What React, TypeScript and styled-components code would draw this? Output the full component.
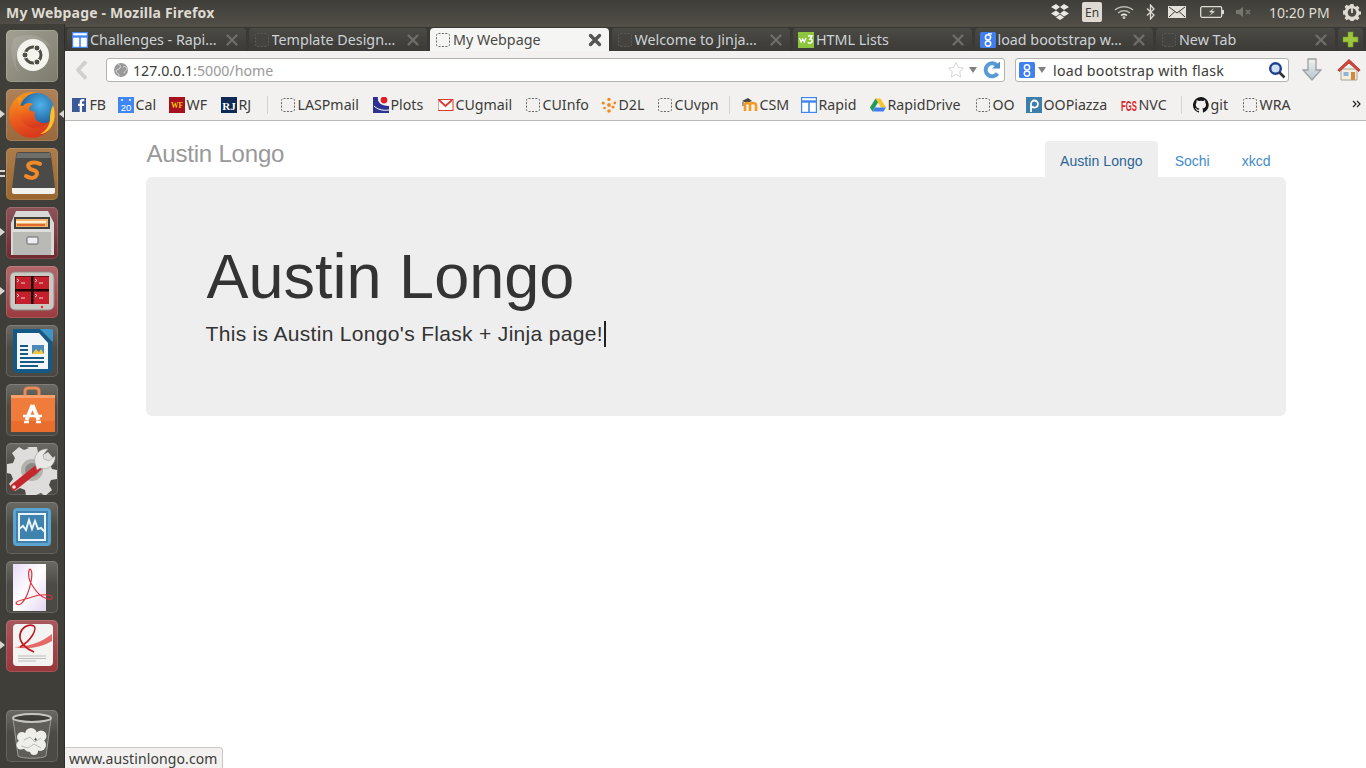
import React from "react";
import styled, { createGlobalStyle } from "styled-components";

const Global = createGlobalStyle`
  html, body { margin: 0; height: 100%; overflow: hidden; background: #fff; }
  #root { height: 100%; }
  * { box-sizing: border-box; }
`;
const UI = `"Noto Sans", "Open Sans", sans-serif`;
const WEB = `"Liberation Sans", Arial, sans-serif`;

const Shell = styled.div`display:flex;flex-direction:column;width:100vw;height:100vh;position:relative;font-family:${UI};`;
const TopBar = styled.header`height:24px;flex:none;display:flex;align-items:center;justify-content:space-between;background:linear-gradient(#3f3e39,#4f4d45);padding-left:6px;`;
const WindowTitle = styled.div`font-size:14px;font-weight:700;color:#dfdbd2;letter-spacing:.2px;`;
const Indicators = styled.div`display:flex;align-items:center;height:24px;padding-right:5px;`;
const Indicator = styled.span<{ $w: number; $l?: number }>`width:${p => p.$w}px;margin-left:${p => p.$l ?? 0}px;display:flex;justify-content:center;align-items:center;flex:none;`;
const LangBox = styled.span`width:20px;height:20px;margin-left:12px;border-radius:2px;background:#dfdbd4;color:#3c3b37;font-size:12px;display:flex;align-items:center;justify-content:center;`;
const Clock = styled.span`width:87px;padding-left:14px;font-size:14px;color:#dfdbd2;white-space:nowrap;`;
const Body = styled.div`flex:1;display:flex;min-height:0;`;
const Launcher = styled.nav`width:65px;flex:none;background:#3f3e38;border-right:1px solid #2f2e2a;display:flex;flex-direction:column;gap:7px;padding:6px 0 6px 6px;`;
const Tile = styled.div<{ $tone: string; $push?: boolean }>`position:relative;width:52px;height:52px;border-radius:5px;background:${p => p.$tone};box-shadow:inset 0 0 0 1px rgba(255,255,255,.14);margin-top:${p => (p.$push ? "auto" : 0)};svg{display:block;}`;
const Pip = styled.i<{ $right?: boolean; $top?: number }>`position:absolute;top:${p => p.$top ?? 21}px;${p => (p.$right ? "right:-6px;border-right:5px solid #d8d6d0;" : "left:-6px;border-left:5px solid #d8d6d0;")}width:0;height:0;border-top:4px solid transparent;border-bottom:4px solid transparent;`;
const DashPip = styled.i<{ $top: number }>`position:absolute;left:-6px;top:${p => p.$top}px;width:5px;height:2px;background:#d8d6d0;`;
const Browser = styled.div`flex:1;min-width:0;display:flex;flex-direction:column;`;
const TabStrip = styled.div`height:27px;flex:none;background:linear-gradient(#4f4d45 0,#565449 8%,#3a3935 13%,#3a3935 100%);padding:4px 0 0 2px;display:flex;gap:3px;`;
const Tab = styled.div<{ $active?: boolean }>`width:178.5px;height:23px;flex:none;display:flex;align-items:center;gap:2px;padding:0 7px 0 5px;border-radius:4px 4px 0 0;font-size:14.3px;white-space:nowrap;
  background:${p => (p.$active ? "#f5f5f4" : "linear-gradient(#4b4a45,#3b3a36)")};color:${p => (p.$active ? "#4a4a46" : "#cdd2d6")};`;
const TabLabel = styled.span`flex:1;overflow:hidden;min-width:0;`;
const NewTab = styled.div`width:25px;height:23px;flex:none;border-radius:4px 4px 0 0;background:linear-gradient(#4b4a45,#3b3a36);display:flex;align-items:center;justify-content:center;`;
const NavBar = styled.div`height:37px;flex:none;background:#f2f1f0;display:flex;align-items:flex-start;padding:7px 0 0 10px;`;
const BackSlot = styled.div`width:31px;height:24px;flex:none;display:flex;align-items:center;`;
const Field = styled.div<{ $w: number }>`width:${p => p.$w}px;height:24px;flex:none;background:#fff;border:1px solid #b2b2ae;border-radius:3px;display:flex;align-items:center;font-size:14.2px;color:#3c3b37;`;
const Host = styled.span`color:#3c3b37;`;
const PathPart = styled.span`color:#999;`;
const Spacer = styled.span`flex:1;`;
const SearchText = styled.span`flex:1;margin-left:6px;color:#3c3b37;white-space:nowrap;letter-spacing:.25px;`;
const ToolSlot = styled.div<{ $l: number }>`margin-left:${p => p.$l}px;height:24px;display:flex;align-items:center;flex:none;`;
const BookmarkBar = styled.div`height:33px;flex:none;background:#f2f1f0;border-bottom:1px solid #b9b9b6;display:flex;align-items:center;padding:1px 0 0 7px;position:relative;`;
const Bookmark = styled.div<{ $w: number }>`width:${p => p.$w}px;flex:none;display:flex;align-items:center;gap:1.5px;font-size:14.2px;color:#3c3b37;white-space:nowrap;`;
const BarSep = styled.div<{ $w: number }>`width:${p => p.$w}px;flex:none;height:18px;&::before{content:"";display:block;width:1px;height:18px;background:#d4d3d0;}`;
const Chevron = styled.div`position:absolute;right:5px;top:12px;line-height:0;`;
const Page = styled.main`flex:1;background:#fff;min-height:0;`;
const Container = styled.div`width:1140px;margin:0 auto;font-family:${WEB};`;
const Header = styled.div`height:56px;display:flex;justify-content:space-between;align-items:flex-end;`;
const Brand = styled.h3`margin:0 0 7px 1px;font-size:24px;font-weight:400;line-height:33px;letter-spacing:-.2px;color:#999;`;
const Pills = styled.ul`margin:0;padding:0;list-style:none;display:flex;gap:2px;`;
const Pill = styled.li<{ $active?: boolean }>`padding:10px 15px 0;height:36px;line-height:20px;font-size:14px;border-radius:4px 4px 0 0;letter-spacing:${p => (p.$active ? ".08px" : "0")};color:${p => (p.$active ? "#2a6496" : "#428bca")};background:${p => (p.$active ? "#eee" : "transparent")};`;
const Jumbotron = styled.section`height:239px;background:#eee;border-radius:6px;padding:65px 60px 0;color:#333;`;
const Heading = styled.h1`margin:0 0 8px 1px;font-size:63px;font-weight:400;line-height:69px;`;
const Lead = styled.p`margin:0;font-size:21px;font-weight:200;line-height:30px;letter-spacing:.32px;display:flex;align-items:center;`;
const Caret = styled.span`width:2px;height:26px;background:#222;margin-left:1px;`;
const StatusTip = styled.div`position:absolute;left:65px;bottom:0;height:21px;width:158px;padding-left:4px;background:#f2f1f0;border:1px solid #c8c8c5;border-left:0;border-bottom:0;border-radius:0 4px 0 0;font-size:14px;line-height:21px;letter-spacing:.1px;color:#3c3b37;white-space:nowrap;`;

const S = { style: { flex: "none" as const } };
const Dash = ({ dark }: { dark?: boolean }) => (
  <svg width="16" height="16" viewBox="0 0 16 16" {...S}>
    <rect x="1.5" y="1.5" width="13" height="13" rx="2" fill={dark ? "#44433f" : "none"} stroke={dark ? "#5e5d59" : "#666"} strokeDasharray="2 1.4" />
  </svg>
);
const Close = ({ active }: { active?: boolean }) => (
  <svg width="14" height="14" viewBox="0 0 14 14" {...S}>
    <path d="M2.5 2.5l9 9M11.5 2.5l-9 9" stroke={active ? "#555" : "#6e6d67"} strokeWidth={active ? 3.4 : 2.4} strokeLinecap="round" />
  </svg>
);
const Rapid = () => (
  <svg width="16" height="16" viewBox="0 0 16 16" {...S}>
    <rect x=".5" y=".5" width="15" height="15" fill="#fff" stroke="#3f86f4" strokeWidth="1.4" />
    <path d="M1 4.5h14" stroke="#3f86f4" strokeWidth="2.4" /><path d="M8 5v10" stroke="#3f86f4" strokeWidth="1.6" />
  </svg>
);
const GBlue = () => (
  <svg width="16" height="16" viewBox="0 0 16 16" {...S}>
    <rect width="16" height="16" rx="1.5" fill="#3f7ff0" />
    <circle cx="8" cy="5.3" r="2.6" fill="none" stroke="#fff" strokeWidth="1.5" />
    <circle cx="8" cy="11.6" r="2.7" fill="none" stroke="#fff" strokeWidth="1.5" />
    <path d="M8 1.8h4" stroke="#fff" strokeWidth="1.2" />
  </svg>
);
const W3 = () => (
  <svg width="16" height="16" viewBox="0 0 16 16" {...S}>
    <rect width="16" height="16" fill="#8cc63f" />
    <path d="M1.5 6l1.6 4 1.6-3 1.6 3L7.8 6" stroke="#fff" strokeWidth="1.2" fill="none" />
    <path d="M10 4h4l-2 3c2 0 2.4 1.4 2 2.8-.5 1.6-3 1.8-4.2.4" stroke="#fff" strokeWidth="1.4" fill="none" />
  </svg>
);
const Fb = () => <svg width="16" height="16" viewBox="0 0 16 16" {...S}><rect width="14" height="14" y="1" fill="#3b5998" /><path d="M10 15V9h2l.3-2.3H10V5.4c0-.7.3-1.1 1.1-1.1h1.2V2.2c-2.8-.4-4.6.4-4.6 2.8v1.7H6V9h1.7v6z" fill="#fff" /></svg>;
const Cal = () => <svg width="16" height="16" viewBox="0 0 16 16" {...S}><rect width="16" height="16" fill="#3f86f4" /><rect x="3" y="2" width="2" height="2" fill="#cfe0fb" /><rect x="11" y="2" width="2" height="2" fill="#cfe0fb" /><text x="8" y="14" textAnchor="middle" fontSize="9.5" fontFamily="Liberation Sans" fill="#fff">20</text></svg>;
const Wf = () => <svg width="16" height="16" viewBox="0 0 16 16" {...S}><rect width="16" height="16" fill="#a6101f" /><text x="8" y="11" textAnchor="middle" fontSize="7.5" fontWeight="700" fontFamily="Liberation Serif" fill="#f5c518">WF</text></svg>;
const Rj = () => <svg width="16" height="16" viewBox="0 0 16 16" {...S}><rect width="16" height="16" fill="#0e2a55" /><text x="8" y="12.5" textAnchor="middle" fontSize="11" fontWeight="700" fontFamily="Liberation Serif" fill="#fff">RJ</text></svg>;
const Plots = () => <svg width="16" height="16" viewBox="0 0 16 16" {...S}><rect width="16" height="16" fill="#f6f6fb" /><path d="M0 0h5c-1 5 3 9 11 9v7H0z" fill="#2d3191" /><path d="M1 9c3 3 8 5 15 4" stroke="#fff" fill="none" /><circle cx="11" cy="3" r="3.4" fill="#e21f26" /></svg>;
const Gmail = () => <svg width="16" height="16" viewBox="0 0 16 16" {...S}><rect y="2.5" width="15" height="11" fill="#fff" stroke="#dc3a2e" /><path d="M1 3l6.5 6L14 3" fill="none" stroke="#dc3a2e" strokeWidth="1.8" /></svg>;
const D2l = () => <svg width="16" height="16" viewBox="0 0 16 16" {...S}><g fill="#f08a1d"><circle cx="8" cy="2.4" r="1.7" /><circle cx="2.2" cy="6" r="1.6" /><circle cx="13.8" cy="6" r="1.4" /><circle cx="8" cy="8" r="1.9" /><circle cx="3.6" cy="11" r="1.3" /><circle cx="12" cy="10" r="1.6" /><circle cx="8" cy="14" r="1.8" /></g></svg>;
const Moodle = () => <svg width="16" height="16" viewBox="0 0 16 16" {...S}><path d="M0 4l6-3 4 3-5 2z" fill="#444" /><path d="M1 5v4" stroke="#444" /><path d="M3 14V8c0-1 .8-2 2.2-2S8 7 8 8v6M8 8c0-1.200.8-2 2.700-2S14 7 14 8v6" fill="none" stroke="#f39a1f" strokeWidth="2.600" /></svg>;
const Drive = () => <svg width="16" height="16" viewBox="0 0 16 16" {...S}><path d="M5.500 1.500h5L16 10.500h-5z" fill="#f8c42d" /><path d="M5.500 1.500L0 10.500l2.500 4L8 5.500z" fill="#1f9d55" /><path d="M2.500 14.500h11l2.500-4H5z" fill="#3f7ff0" /></svg>;
const Piazza = () => <svg width="16" height="16" viewBox="0 0 16 16" {...S}><rect width="16" height="16" fill="#3d7fa8" /><path d="M5 15V7a3.500 3.500 0 117 0 3.500 3.500 0 01-6 2.500" fill="none" stroke="#fff" strokeWidth="1.800" /></svg>;
const Fgs = () => <svg width="16" height="16" viewBox="0 0 16 16" {...S}><text transform="translate(0 13.5) scale(.55 1)" fontSize="14" fontWeight="700" fontFamily="Liberation Sans" fill="#d8232a">FGS</text></svg>;
const Git = () => <svg width="16" height="16" viewBox="0 0 16 16" {...S}><path d="M8 0a8 8 0 00-2.500 15.600c.4.100.5-.2.500-.4v-1.400c-2.200.5-2.700-1-2.700-1-.4-.9-.9-1.200-.9-1.200-.7-.5.100-.5.100-.5.800.1 1.200.8 1.200.8.700 1.200 1.900.9 2.300.7.100-.5.300-.9.500-1.100-1.800-.2-3.700-.9-3.700-4 0-.9.300-1.600.8-2.100-.1-.2-.4-1 .1-2.100 0 0 .7-.2 2.200.8a7.600 7.600 0 014 0c1.500-1 2.200-.8 2.200-.8.400 1.100.2 1.900.1 2.100.5.600.8 1.300.8 2.100 0 3.100-1.900 3.700-3.700 3.900.3.300.6.800.6 1.500v2.200c0 .2.100.5.600.4A8 8 0 008 0z" fill="#161616" /></svg>;

const bookmarks: { t: string; i?: React.ReactNode; w: number; sep?: boolean }[] = [
  { t: "FB", i: <Fb />, w: 46 }, { t: "Cal", i: <Cal />, w: 51 }, { t: "WF", i: <Wf />, w: 52 }, { t: "RJ", i: <Rj />, w: 46 },
  { t: "", w: 13, sep: true },
  { t: "LASPmail", i: <Dash />, w: 93 }, { t: "Plots", i: <Plots />, w: 65 }, { t: "CUgmail", i: <Gmail />, w: 87 }, { t: "CUInfo", i: <Dash />, w: 76 }, { t: "D2L", i: <D2l />, w: 56 }, { t: "CUvpn", i: <Dash />, w: 72 },
  { t: "", w: 13, sep: true },
  { t: "CSM", i: <Moodle />, w: 59 }, { t: "Rapid", i: <Rapid />, w: 69 }, { t: "RapidDrive", i: <Drive />, w: 105 }, { t: "OO", i: <Dash />, w: 51 }, { t: "OOPiazza", i: <Piazza />, w: 95 }, { t: "NVC", i: <Fgs />, w: 60 },
  { t: "", w: 12, sep: true },
  { t: "git", i: <Git />, w: 49 }, { t: "WRA", i: <Dash />, w: 60 },
];
const tabs: { t: string; i: React.ReactNode; a?: boolean }[] = [
  { t: "Challenges - Rapi…", i: <Rapid /> }, { t: "Template Design…", i: <Dash dark /> }, { t: "My Webpage", i: <Dash />, a: true }, { t: "Welcome to Jinja…", i: <Dash dark /> }, { t: "HTML Lists", i: <W3 /> }, { t: "load bootstrap w…", i: <GBlue /> }, { t: "New Tab", i: <Dash dark /> },
];

const grey = "linear-gradient(#6b6a63,#4c4b45 45%,#4a4943)";
const I = ({ children }: { children: React.ReactNode }) => <svg width="52" height="52" viewBox="0 0 52 52">{children}</svg>;

const UbuntuIcon = () => <I>
  <path d="M8 8c14-6 30-3 38 10-10-8-24-8-32 0-6 7-6 18 0 26C6 36 3 18 8 8z" fill="#fff" opacity=".12" />
  <circle cx="27" cy="25" r="16" fill="#f4f3ee" />
  <circle cx="27" cy="25" r="8" fill="none" stroke="#504e45" strokeWidth="3" />
  <circle cx="19" cy="25" r="3" fill="#504e45" stroke="#f4f3ee" /><circle cx="31" cy="18" r="3" fill="#504e45" stroke="#f4f3ee" /><circle cx="31" cy="32" r="3" fill="#504e45" stroke="#f4f3ee" />
</I>;
const FirefoxIcon = () => <I>
  <defs><radialGradient id="ffb" cx=".6" cy=".35" r=".7"><stop offset="0" stopColor="#4fb3e8" /><stop offset="1" stopColor="#16508f" /></radialGradient>
    <linearGradient id="ffo" x1="0" y1="0" x2=".3" y2="1"><stop offset="0" stopColor="#f7a11b" /><stop offset=".6" stopColor="#ec5d1e" /><stop offset="1" stopColor="#d83b1c" /></linearGradient></defs>
  <circle cx="26" cy="26" r="23" fill="url(#ffo)" />
  <circle cx="31" cy="21" r="17" fill="url(#ffb)" />
  <path d="M47 16c3 9 2 17-3 24-3 3-7 5-10 5 6-3 10-9 10-15 0-5 1-10 3-14z" fill="#fbc12d" />
  <path d="M12 9c-1 5 1 8 5 8 2-3 7-4 10-2-2 1-4 3-4 5s4 2 6 3c-1 3 0 8 4 10 4 2 8 1 10-1-4 5-10 8-16 7-10-2-16-12-13-22 0-3 1-6 2-8z" fill="url(#ffo)" />
</I>;
const SublimeIcon = () => <I>
  <path d="M6 39h43v5c0 1-1 2-2 2H8c-1 0-2-1-2-2z" fill="#f1f1ee" />
  <path d="M10 7c0-2 1-3 3-3h29c2 0 3 1 3 3l4 33H6z" fill="#4a4a48" />
  <path d="M11 5h33l1 5H10z" fill="#6d6d6a" />
  <path d="M34 16c-3-2-9-2-11 0s0 5 4 6 5 3 3 6-7 2-10 0" fill="none" stroke="#f08a28" strokeWidth="4" strokeLinecap="round" />
</I>;
const FilesIcon = () => <I>
  <path d="M10 4h32l6 12v32H5V16z" fill="#d8d8d6" />
  <rect x="8" y="10" width="36" height="12" fill="#3f3f3c" />
  <rect x="10" y="12" width="32" height="8" fill="#f2b76f" /><rect x="10" y="14" width="30" height="2" fill="#fff3dd" /><rect x="11" y="17" width="28" height="2" fill="#e06a2c" />
  <path d="M7 22h38v26H7z" fill="#b9b9b6" /><path d="M7 22h38v3H7z" fill="#dededc" />
  <rect x="21" y="30" width="11" height="7" rx="1" fill="#eee" stroke="#666" />
</I>;
const TerminalIcon = () => <I>
  <rect x="4" y="6" width="44" height="38" rx="5" fill="#c9c8c2" stroke="#8d8c86" />
  <rect x="9" y="10" width="34" height="28" fill="#1c0406" />
  {[[9, 10], [27, 10], [9, 25], [27, 25]].map(([x, y]) => <g key={x + "-" + y}><rect x={x + .5} y={y + .5} width="15.5" height="12.500" fill="#c4202b" /><path d={`M${x + 2} ${y + 3}l2 1.500-2 1.500M${x + 6} ${y + 7}h4`} stroke="#fff" fill="none" strokeWidth=".8" /></g>)}
  <circle cx="36" cy="41" r="1.200" fill="#e0262d" />
</I>;
const WriterIcon = () => <I>
  <path d="M7 4h27l12 13v27c0 2-2 4-4 4H11c-2 0-4-2-4-4z" fill="#155a87" />
  <path d="M34 4h11a2 2 0 012 2v11z" fill="#3e95c9" />
  <path d="M11 8h22l9 10v26H11z" fill="#f3f6f8" />
  <rect x="26" y="20" width="12" height="9" fill="#4a89b8" /><path d="M26 29l4-5 3 3 2-3 3 5z" fill="#f3c53b" />
  <path d="M14 21h8M14 25h8M14 29h8M14 33h24M14 37h24M14 41h18" stroke="#155a87" strokeWidth="1.800" />
</I>;
const SoftwareIcon = () => <I>
  <path d="M19 12V7c0-2 2-3 4-3h6c2 0 4 1 4 3v5" fill="none" stroke="#e98a58" strokeWidth="3" />
  <rect x="5" y="11" width="44" height="37" fill="#f07c3b" /><rect x="5" y="11" width="44" height="3" fill="#f9a06c" /><rect x="5" y="37" width="44" height="11" fill="#e96d2d" />
  <path d="M26.500 21l-6 15M26.500 21l6 15" stroke="#fff" strokeWidth="3.800" /><path d="M17 32h19M18 38h5M30 38h5" stroke="#fff" strokeWidth="2.500" />
</I>;
const SettingsIcon = () => <I>
  <path d="M21 4h10l1 6 5 2 5-3 6 7-4 5 2 5 5 1v9l-6 1-2 5 3 5-7 6-4-3-5 2-1 0H20l-1-5-5-2-5 3-6-7 4-5-2-5-4-1v-9l6-1 2-5-3-5 7-6 5 3 5-2z" fill="#dedddb" />
  <circle cx="26" cy="27" r="11" fill="#b3b2ad" /><circle cx="26" cy="27" r="7" fill="#8c8b86" />
  <path d="M8 44l25-20" stroke="#c5272c" strokeWidth="7" strokeLinecap="round" />
  <circle cx="8" cy="44" r="1.800" fill="#eee" />
  <path d="M29 20c-2-7 4-15 13-14l-5 6 1 4 5 2 6-5c1 9-8 15-15 12l-3 2z" fill="#e8e8e6" stroke="#9a9995" strokeWidth=".6" />
</I>;
const MonitorIcon = () => <I>
  <rect x="7" y="6" width="38" height="38" rx="4" fill="#5ba3d0" /><rect x="10" y="9" width="32" height="32" fill="#3f82ad" />
  <rect x="13" y="12" width="26" height="26" fill="none" stroke="#e9f3f9" strokeWidth="2" />
  <path d="M13 27l4-3 3 4 3-10 3 9 3-8 3 8 3-1 4 4" fill="none" stroke="#e9f3f9" strokeWidth="2" />
</I>;
const ReaderIcon = () => <I>
  <defs><linearGradient id="pp" x1="0" y1="0" x2="1" y2="1"><stop offset="0" stopColor="#e9dcf6" /><stop offset=".5" stopColor="#fff" /><stop offset="1" stopColor="#e4d6f0" /></linearGradient></defs>
  <rect x="7" y="3" width="33" height="47" fill="url(#pp)" />
  <path d="M10 42c2 4 7 1 11-8s6-22 4-25-3 3-2 8 8 16 14 19 10 3 9 0-12-3-20 0-15 3-16 6z" fill="none" stroke="#e0303a" strokeWidth="1.200" />
</I>;
const EvinceIcon = () => <I>
  <rect x="7" y="4" width="40" height="42" rx="4" fill="#f3f3f1" />
  <path d="M8 27c14 0 28-5 38-13v7c-10 6-24 9-38 6z" fill="#e46a6a" />
  <path d="M28 6c-6-3-13 2-14 9s6 14 14 17" fill="none" stroke="#c0171f" strokeWidth="1.800" /><path d="M28 6c3 3-2 14-14 21" fill="none" stroke="#c0171f" strokeWidth="1.500" />
  <path d="M12 36h28M12 38.500h28M12 41h18" stroke="#bdbdb9" />
</I>;
const TrashIcon = () => <I>
  <path d="M7 8l5 38c4 3 24 3 28 0l5-38z" fill="#5f5e59" stroke="#9d9c97" />
  <ellipse cx="26" cy="8" rx="19" ry="4" fill="#3e3d39" stroke="#c6c5c0" strokeWidth="2" />
  <g fill="#eeeeeb">
    <circle cx="16" cy="27" r="5" /><circle cx="25" cy="24" r="6" /><circle cx="35" cy="26" r="5.500" />
    <circle cx="15" cy="35" r="4.500" /><circle cx="24" cy="35" r="7" /><circle cx="34" cy="35" r="6" /><circle cx="28" cy="41" r="4" />
  </g>
  <path d="M18 30l6-3 5 5 6-4M15 36l7 2 6-4 7 4" stroke="#bbbbb7" fill="none" />
</I>;

export default function App() {
  return (
    <Shell>
      <Global />
      <TopBar>
        <WindowTitle>My Webpage - Mozilla Firefox</WindowTitle>
        <Indicators>
          <Indicator $w={20}><svg width="18" height="16" viewBox="0 0 18 16"><path d="M5 0l4 3-4 3-5-3zM13 0l5 3-5 3-4-3zM5 6.500l4 3-4 3-5-3zM13 6.500l5 3-5 3-4-3zM5 13.500l4-3 4 3-4 2.500z" fill="#eceae5" /></svg></Indicator>
          <LangBox>En</LangBox>
          <Indicator $w={32} $l={6}><svg width="20" height="14" viewBox="0 0 20 14" fill="none" stroke="#b9b7ae" strokeWidth="1.500"><path d="M1 5c5-4.500 13-4.500 18 0M4 8c3.500-3 8.500-3 12 0" /><path d="M7 10.500c2-1.500 4-1.500 6 0" stroke="#eceae5" /><circle cx="10" cy="12.500" r=".8" fill="#eceae5" /></svg></Indicator>
          <Indicator $w={10} $l={5}><svg width="9" height="16" viewBox="0 0 9 16" fill="none" stroke="#dfdbd2" strokeWidth="1.300"><path d="M1 4.500l7 6.500-3.500 4V1L8 5 1 11.500" /></svg></Indicator>
          <Indicator $w={28} $l={8}><svg width="18" height="12" viewBox="0 0 18 12"><rect x=".5" y=".5" width="17" height="11" fill="#e4e1da" stroke="#e4e1da" /><path d="M1 1l8 6 8-6M1 11l6-5.500M17 11l-6-5.500" stroke="#3c3b37" fill="none" /></svg></Indicator>
          <Indicator $w={25} $l={8}><svg width="24" height="12" viewBox="0 0 24 12"><rect x=".7" y=".7" width="21" height="10.600" rx="1.500" fill="#4d4c46" stroke="#dfdbd2" strokeWidth="1.300" /><rect x="22" y="4" width="2" height="4" fill="#dfdbd2" /><path d="M14 2l-5 4 3 .5L9 10l6-4.500-3-.5z" fill="#dfdbd2" /></svg></Indicator>
          <Indicator $w={24} $l={7}><svg width="15" height="12" viewBox="0 0 15 12"><path d="M0 4h3l4-3v10L3 8H0z" fill="#77766e" /><path d="M10 4l4 4M14 4l-4 4" stroke="#77766e" strokeWidth="1.500" /></svg></Indicator>
          <Clock>10:20 PM</Clock>
          <Indicator $w={19}><svg width="18" height="18" viewBox="0 0 18 18"><path d="M7.500 1h3l.4 2 1.800.8 1.700-1.100 2 2-1.100 1.700.8 1.800 2 .4v2.800l-2 .4-.8 1.800 1.100 1.700-2 2-1.700-1.100-1.800.8-.4 1.800h-3l-.4-1.800-1.800-.8-1.700 1.100-2-2 1.100-1.700-.8-1.800-1.900-.4V7.600l2-.4.700-1.800-1.100-1.700 2-2 1.700 1.100 1.800-.8z" fill="#dfdbd2" /><circle cx="9" cy="9.500" r="4.300" fill="#4a4942" /><path d="M9 5v5" stroke="#dfdbd2" strokeWidth="1.800" /></svg></Indicator>
        </Indicators>
      </TopBar>
      <Body>
        <Launcher>
          <Tile $tone="linear-gradient(135deg,#a3a193,#7d7b6e)"><UbuntuIcon /></Tile>
          <Tile $tone="linear-gradient(#ad8259,#99693d)"><FirefoxIcon /><Pip /><Pip $right /></Tile>
          <Tile $tone="linear-gradient(#ab7c4b,#99672f)"><SublimeIcon /><DashPip $top={22} /><DashPip $top={27} /></Tile>
          <Tile $tone="linear-gradient(#8d5459,#6e2a31)"><FilesIcon /><Pip /></Tile>
          <Tile $tone="linear-gradient(#b4666b,#9c3b40)"><TerminalIcon /><Pip /></Tile>
          <Tile $tone={grey}><WriterIcon /></Tile>
          <Tile $tone={grey}><SoftwareIcon /></Tile>
          <Tile $tone={grey}><SettingsIcon /></Tile>
          <Tile $tone={grey}><MonitorIcon /></Tile>
          <Tile $tone={grey}><ReaderIcon /></Tile>
          <Tile $tone="linear-gradient(#a8585c,#98373c)"><EvinceIcon /><Pip /></Tile>
          <Tile $tone={grey} $push><TrashIcon /></Tile>
        </Launcher>
        <Browser>
          <TabStrip>
            {tabs.map(t => (
              <Tab key={t.t} $active={t.a}>{t.i}<TabLabel>{t.t}</TabLabel><Close active={t.a} /></Tab>
            ))}
            <NewTab><svg width="17" height="17" viewBox="0 0 17 17"><path d="M6 1h5v5h5v5h-5v5H6v-5H1V6h5z" fill="#9cc63f" stroke="#6f9a24" strokeWidth=".6" /></svg></NewTab>
          </TabStrip>
          <NavBar>
            <BackSlot><svg width="16" height="20" viewBox="0 0 16 20"><path d="M11 1.500L3 10l8 8.500" fill="none" stroke="#d0d0cd" strokeWidth="4" strokeLinejoin="round" /></svg></BackSlot>
            <Field $w={899}>
              <svg width="16" height="16" viewBox="0 0 16 16" style={{ margin: "0 4px 0 6px", flex: "none" }}><circle cx="8" cy="8" r="7" fill="#999" /><path d="M5 2c2 1 3 2 2 4S3 7 3 9s3 2 3 5M10 5c2-1 4 0 4 2s-3 2-3 4" stroke="#ddd" fill="none" /></svg>
              <Host>127.0.0.1</Host><PathPart>:5000/home</PathPart>
              <Spacer />
              <svg width="18" height="18" viewBox="0 0 18 18" style={{ flex: "none" }}><path d="M9 1.500l2.300 5 5.200.6-3.800 3.600 1 5.300L9 13.300 4.300 16l1-5.300L1.500 7.100l5.200-.6z" fill="#fff" stroke="#d6d6d3" /></svg>
              <svg width="10" height="8" viewBox="0 0 10 8" style={{ margin: "0 5px 0 3px", flex: "none" }}><path d="M1 1h8L5 7z" fill="#808080" /></svg>
              <svg width="18" height="18" viewBox="0 0 18 18" style={{ marginRight: 3, flex: "none" }}><path d="M14 4.500a6.500 6.500 0 10.500 8" fill="none" stroke="#5b9bd5" strokeWidth="4" /><path d="M9 7.500h8V.5z" fill="#4a8fcf" /></svg>
            </Field>
            <ToolSlot $l={10}>
              <Field $w={274}>
                <svg width="16" height="16" viewBox="0 0 16 16" style={{ marginLeft: 3, flex: "none" }}><rect width="16" height="16" rx="1.500" fill="#3f7ff0" /><circle cx="8" cy="5.300" r="2.600" fill="none" stroke="#fff" strokeWidth="1.500" /><circle cx="8" cy="11.600" r="2.700" fill="none" stroke="#fff" strokeWidth="1.500" /></svg>
                <svg width="9" height="7" viewBox="0 0 9 7" style={{ marginLeft: 3, flex: "none" }}><path d="M0 0h8L4 6z" fill="#808080" /></svg>
                <SearchText>load bootstrap with flask</SearchText>
                <svg width="18" height="18" viewBox="0 0 18 18" style={{ marginRight: 2, flex: "none" }}><circle cx="7.500" cy="7.500" r="5.300" fill="#cfe0f5" stroke="#1f3f8f" strokeWidth="2.400" /><path d="M11.500 11.500l5 5" stroke="#333" strokeWidth="2.600" /></svg>
              </Field>
            </ToolSlot>
            <ToolSlot $l={13}><svg width="20" height="24" viewBox="0 0 20 24"><defs><linearGradient id="dl" x1="0" y1="0" x2="0" y2="1"><stop offset="0" stopColor="#f0f1f1" /><stop offset="1" stopColor="#b7c4cc" /></linearGradient></defs><path d="M6 1h8v11h5l-9 10L1 12h5z" fill="url(#dl)" stroke="#9ba0a3" strokeWidth="1.300" /></svg></ToolSlot>
            <ToolSlot $l={15}><svg width="24" height="24" viewBox="0 0 24 24"><path d="M4 11v11h16V11z" fill="#f3eee2" stroke="#a8a294" /><path d="M0.800 12L12 1.500 23.200 12l-1.500 1.500L12 5 2.300 13.500z" fill="#d8453a" stroke="#a92c22" strokeWidth=".8" /><rect x="14" y="14" width="4" height="8" fill="#d08a3c" /><rect x="6.500" y="14" width="5" height="4" fill="#8eb4d8" /></svg></ToolSlot>
          </NavBar>
          <BookmarkBar>
            {bookmarks.map((b, i) => b.sep ? <BarSep key={i} $w={b.w} /> : <Bookmark key={b.t} $w={b.w}>{b.i}{b.t}</Bookmark>)}
            <Chevron><svg width="9" height="8" viewBox="0 0 9 8" fill="none" stroke="#222" strokeWidth="1.200"><path d="M1 1l3 3-3 3M5 1l3 3-3 3" /></svg></Chevron>
          </BookmarkBar>
          <Page>
            <Container>
              <Header>
                <Brand>Austin Longo</Brand>
                <Pills>
                  <Pill $active>Austin Longo</Pill>
                  <Pill>Sochi</Pill>
                  <Pill>xkcd</Pill>
                </Pills>
              </Header>
              <Jumbotron>
                <Heading>Austin Longo</Heading>
                <Lead>This is Austin Longo's Flask + Jinja page!<Caret /></Lead>
              </Jumbotron>
            </Container>
          </Page>
        </Browser>
      </Body>
      <StatusTip>www.austinlongo.com</StatusTip>
    </Shell>
  );
}
